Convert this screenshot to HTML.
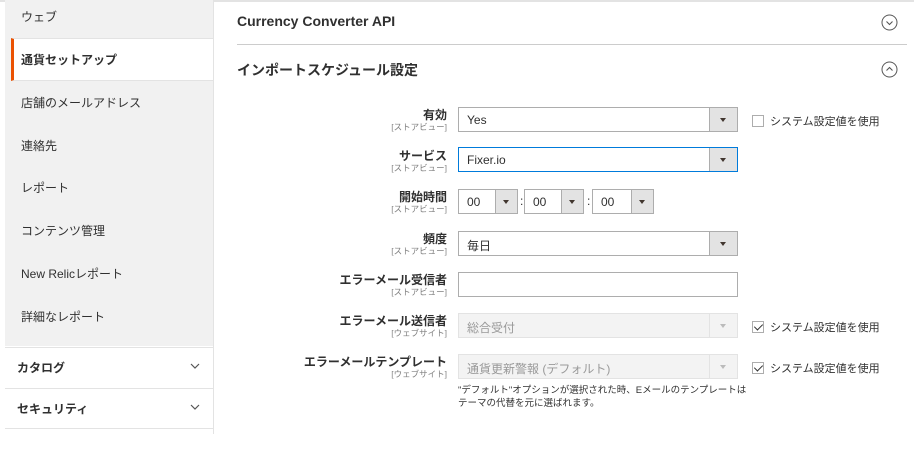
<!DOCTYPE html>
<html><head><meta charset="utf-8"><style>
*{box-sizing:border-box;margin:0;padding:0}
body{width:914px;height:434px;overflow:hidden;background:#fff;font-family:"Liberation Sans","Noto Sans CJK JP",sans-serif;color:#303030;position:relative}
.a{position:absolute}
.side{left:5px;top:0;width:208px;height:346px;background:#f1f1f1}
.it{position:absolute;left:5px;width:208px;font-size:12px;color:#303030;padding-left:16px}
.sec{position:absolute;left:5px;width:208px;height:40px;background:#fff;border-top:1px solid #e3e3e3;font-size:12px;font-weight:bold;padding:11px 0 0 12px;color:#303030}
.sec svg{position:absolute;right:13px;top:15px}
.lbl{position:absolute;right:467px;text-align:right;font-size:12px;font-weight:bold;line-height:13px;color:#303030}
.lbl small{display:block;font-size:8.5px;font-weight:normal;color:#808080;line-height:10px}
.sel{position:absolute;left:458px;width:280px;height:25px;border:1px solid #adadad;background:#fff;font-size:12px;padding:5px 0 0 8px}
.sel .b{position:absolute;right:0;top:0;width:28px;height:100%;background:#e3e3e3;border-left:1px solid #adadad}
.sel .b:after{content:"";position:absolute;left:10px;top:10px;border-left:3px solid transparent;border-right:3px solid transparent;border-top:4px solid #41362f}
.dis{background:#f3f3f3;border-color:#e3e3e3;color:#999}
.dis .b{background:#f3f3f3;border-color:#e3e3e3}
.dis .b:after{border-top-color:#bbb}
.cb{position:absolute;left:752px;font-size:11px;color:#303030}
.cb i{display:inline-block;width:12px;height:12px;border:1px solid #adadad;vertical-align:-2px;margin-right:6px;position:relative;background:#fff}
.cb i.c:after{content:"";position:absolute;left:3px;top:0px;width:4px;height:7px;border-right:1.5px solid #333;border-bottom:1.5px solid #333;transform:rotate(45deg)}
</style></head><body>
<div class="a" style="left:0;top:0;width:914px;height:2px;background:#e3e3e3"></div>
<div class="a side"></div>
<div class="it" style="top:8px">ウェブ</div>
<div class="a" style="left:11px;top:38px;width:202px;height:43px;background:#fff;border-left:3px solid #eb5202;border-top:1px solid #e3e3e3;border-bottom:1px solid #e3e3e3"></div>
<div class="it" style="top:51px;font-weight:bold">通貨セットアップ</div>
<div class="it" style="top:94px">店舗のメールアドレス</div>
<div class="it" style="top:137px">連絡先</div>
<div class="it" style="top:179px">レポート</div>
<div class="it" style="top:222px">コンテンツ管理</div>
<div class="it" style="top:265px">New Relicレポート</div>
<div class="it" style="top:308px">詳細なレポート</div>
<div class="sec" style="top:347px">カタログ<svg width="10" height="6" viewBox="0 0 10 6"><path d="M1 1l4 4 4-4" fill="none" stroke="#555" stroke-width="1.2"/></svg></div>
<div class="sec" style="top:388px">セキュリティ<svg width="10" height="6" viewBox="0 0 10 6"><path d="M1 1l4 4 4-4" fill="none" stroke="#555" stroke-width="1.2"/></svg></div>
<div class="sec" style="top:428px"></div>
<div class="a" style="left:213px;top:0;width:1px;height:434px;background:#e3e3e3"></div>

<div class="a" style="left:237px;top:13px;font-size:14px;font-weight:bold;color:#303030">Currency Converter API</div>
<svg class="a" style="left:881px;top:14px" width="17" height="17" viewBox="0 0 17 17"><circle cx="8.5" cy="8.5" r="7.5" fill="none" stroke="#555" stroke-width="1"/><path d="M5.5 7.5l3 3 3-3" fill="none" stroke="#555" stroke-width="1.1"/></svg>
<div class="a" style="left:237px;top:44px;width:670px;height:1px;background:#ccc"></div>
<div class="a" style="left:237px;top:60px;font-size:14px;font-weight:bold">インポートスケジュール設定</div>
<svg class="a" style="left:881px;top:61px" width="17" height="17" viewBox="0 0 17 17"><circle cx="8.5" cy="8.5" r="7.5" fill="none" stroke="#555" stroke-width="1"/><path d="M5.5 9.5l3-3 3 3" fill="none" stroke="#555" stroke-width="1.1"/></svg>

<div class="lbl" style="top:109px">有効<small>[ストアビュー]</small></div>
<div class="sel" style="top:107px">Yes<span class="b"></span></div>
<div class="cb" style="top:113px"><i></i>システム設定値を使用</div>

<div class="lbl" style="top:150px">サービス<small>[ストアビュー]</small></div>
<div class="sel" style="top:147px;border-color:#007bdb">Fixer.io<span class="b" style="border-left-color:#adadad"></span></div>

<div class="lbl" style="top:191px">開始時間<small>[ストアビュー]</small></div>
<div class="sel" style="top:189px;width:60px">00<span class="b" style="width:22px"><i></i></span></div>
<div class="a" style="left:520px;top:194px;font-size:12px">:</div>
<div class="sel" style="top:189px;left:524px;width:60px">00<span class="b" style="width:22px"></span></div>
<div class="a" style="left:587px;top:194px;font-size:12px">:</div>
<div class="sel" style="top:189px;left:592px;width:62px">00<span class="b" style="width:22px"></span></div>
<style>.sel .b[style*="22px"]:after{left:7px}</style>

<div class="lbl" style="top:233px">頻度<small>[ストアビュー]</small></div>
<div class="sel" style="top:231px">毎日<span class="b"></span></div>

<div class="lbl" style="top:274px">エラーメール受信者<small>[ストアビュー]</small></div>
<div class="sel" style="top:272px"></div>

<div class="lbl" style="top:315px">エラーメール送信者<small>[ウェブサイト]</small></div>
<div class="sel dis" style="top:313px">総合受付<span class="b"></span></div>
<div class="cb" style="top:319px"><i class="c"></i>システム設定値を使用</div>

<div class="lbl" style="top:356px">エラーメールテンプレート<small>[ウェブサイト]</small></div>
<div class="sel dis" style="top:354px">通貨更新警報 (デフォルト)<span class="b"></span></div>
<div class="cb" style="top:360px"><i class="c"></i>システム設定値を使用</div>
<div class="a" style="left:458px;top:384px;font-size:9.5px;line-height:13px;color:#303030">"デフォルト"オプションが選択された時、Eメールのテンプレートは<br>テーマの代替を元に選ばれます。</div>
</body></html>
